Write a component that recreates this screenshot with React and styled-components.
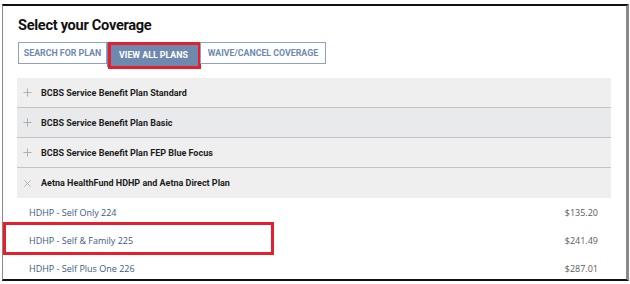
import React from 'react';
import styled, { createGlobalStyle, css } from 'styled-components';

const GlobalStyle = createGlobalStyle`
    html, body {
        margin: 0;
        padding: 0;
        background: #fff;
    }
    body {
        font-family: Roboto, 'Liberation Sans', sans-serif;
    }
`;

const plans = [
    { name: 'BCBS Service Benefit Plan Standard' },
    { name: 'BCBS Service Benefit Plan Basic', shade: true },
    { name: 'BCBS Service Benefit Plan FEP Blue Focus' },
    { name: 'Aetna HealthFund HDHP and Aetna Direct Plan', open: true },
];

const options = [
    { label: 'HDHP - Self Only 224', price: '$135.20' },
    { label: 'HDHP - Self & Family 225', price: '$241.49', marked: true },
    { label: 'HDHP - Self Plus One 226', price: '$287.01' },
];

const tabs = [
    { label: 'SEARCH FOR PLAN', width: 89 },
    { label: 'VIEW ALL PLANS', width: 93, active: true },
    { label: 'WAIVE/CANCEL COVERAGE', width: 126 },
];

function ToggleIcon({ open }) {
    return (
        <Icon viewBox="0 0 10 10">
            {open ? (
                <>
                    <line x1="1.5" y1="1.5" x2="8.5" y2="8.5" />
                    <line x1="8.5" y1="1.5" x2="1.5" y2="8.5" />
                </>
            ) : (
                <>
                    <line x1="5" y1="0.5" x2="5" y2="9.5" />
                    <line x1="0.5" y1="5" x2="9.5" y2="5" />
                </>
            )}
        </Icon>
    );
}

export default function App() {
    return (
        <>
            <GlobalStyle />
            <Frame>
                <Title>Select your Coverage</Title>
                <Tabs>
                    {tabs.map((t) => (
                        <Tab key={t.label} $active={t.active} $width={t.width}>
                            {t.label}
                        </Tab>
                    ))}
                </Tabs>
                <Accordion>
                    {plans.map((p) => (
                        <PlanRow key={p.name} $shade={p.shade}>
                            <ToggleIcon open={p.open} />
                            <PlanName>{p.name}</PlanName>
                        </PlanRow>
                    ))}
                </Accordion>
                <Options>
                    {options.map((o) => (
                        <OptionRow key={o.label} $marked={o.marked}>
                            <OptionLabel>{o.label}</OptionLabel>
                            <Price>{o.price}</Price>
                        </OptionRow>
                    ))}
                </Options>
            </Frame>
        </>
    );
}

const redBox = css`
    &::after {
        content: '';
        position: absolute;
        box-sizing: border-box;
        border: 3px solid #e3202c;
        pointer-events: none;
    }
`;

const Frame = styled.div`
    box-sizing: border-box;
    margin: 4px 0 0 2px;
    width: 627px;
    height: 277px;
    border-top: 2px solid #111;
    border-left: 1px solid #8a8a8a;
    border-right: 3px solid #8a8a8a;
    border-bottom: 2px solid #111;
    padding: 9px 0 0 15px;
    overflow: hidden;
`;

const Title = styled.h1`
    margin: 0;
    font-size: 14.6px;
    line-height: 20px;
    letter-spacing: -0.3px;
    font-weight: 700;
    color: #111;
`;

const Tabs = styled.div`
    display: flex;
    align-items: flex-start;
    margin-top: 7px;
    height: 22px;
`;

const Tab = styled.div`
    position: relative;
    box-sizing: border-box;
    width: ${({ $width }) => $width}px;
    height: 22px;
    display: flex;
    align-items: center;
    justify-content: center;
    border: 1px solid #8ea3c4;
    font-size: 8.8px;
    font-weight: 700;
    color: #6e89b2;
    background: #fff;

    ${({ $active }) =>
        $active &&
        css`
            height: 25px;
            border-color: #6f88ad;
            background: #6f88ad;
            color: #fff;
            ${redBox}
            &::after {
                left: 0;
                right: -2px;
                top: -1px;
                bottom: -3px;
            }
        `}
`;

const Accordion = styled.div`
    margin-top: 14px;
    width: 594px;
    margin-left: -1px;
    background: #efefef;
`;

const PlanRow = styled.div`
    display: flex;
    align-items: center;
    height: 29px;
    padding-left: 6px;
    background: ${({ $shade }) => ($shade ? '#e9eaec' : '#efefef')};
    border-bottom: 1px solid #c4c4c4;

    &:last-child {
        border-bottom: none;
        height: 30px;
    }
`;

const Icon = styled.svg`
    width: 9px;
    height: 9px;
    margin-right: 9px;
    stroke: #a8a8a8;
    stroke-width: 1;
    fill: none;
    flex-shrink: 0;
`;

const PlanName = styled.span`
    font-size: 9px;
    font-weight: 700;
    color: #1d1d1d;
`;

const Options = styled.div`
    width: 594px;
    margin-left: -1px;
`;

const OptionRow = styled.div`
    position: relative;
    display: flex;
    align-items: center;
    justify-content: space-between;
    height: 28px;
    padding: 0 13px 0 12px;
    font-family: 'Open Sans', 'Liberation Sans', sans-serif;
    font-size: 9px;

    ${({ $marked }) =>
        $marked &&
        css`
            ${redBox}
            &::after {
                left: -14px;
                width: 271px;
                top: -4px;
                bottom: -1px;
            }
        `}
`;

const OptionLabel = styled.span`
    color: #3b5a88;
`;

const Price = styled.span`
    color: #5a5a5a;
`;
